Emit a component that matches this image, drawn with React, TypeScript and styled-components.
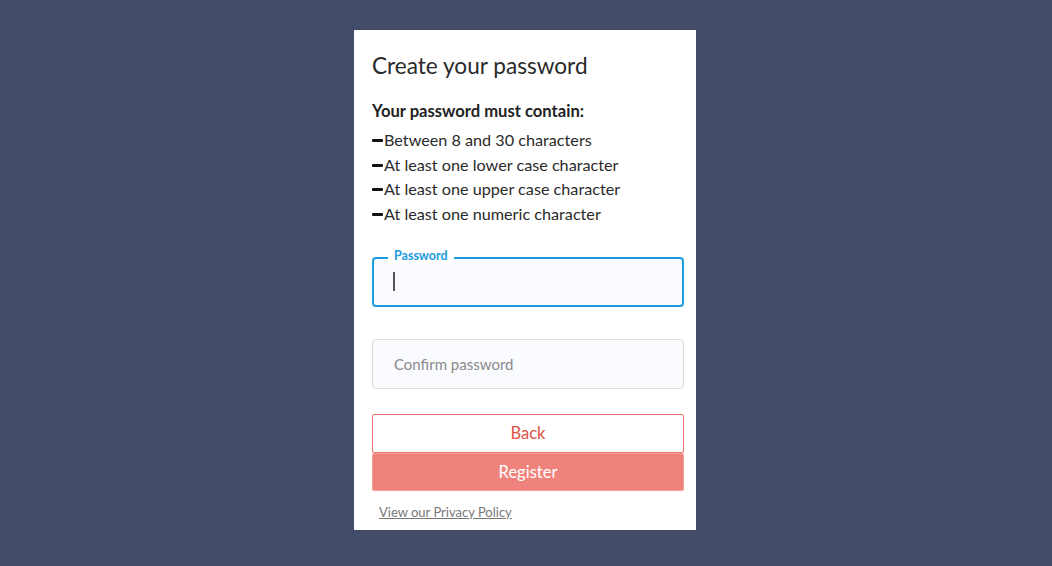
import styled, { createGlobalStyle } from "styled-components";

const GlobalStyle = createGlobalStyle`
  html, body {
    margin: 0;
    padding: 0;
    background: #424c69;
  }
  body {
    font-family: Lato, "Open Sans", sans-serif;
  }
`;

const requirements = [
  "Between 8 and 30 characters",
  "At least one lower case character",
  "At least one upper case character",
  "At least one numeric character",
];

const App = () => {
  return (
    <>
      <GlobalStyle />
      <StyledPage>
        <Card>
          <Title>Create your password</Title>
          <Subtitle>Your password must contain:</Subtitle>
          <RuleList>
            {requirements.map((rule) => (
              <Rule key={rule}>
                <Dash />
                {rule}
              </Rule>
            ))}
          </RuleList>

          <Field $focused>
            <FieldLabel>Password</FieldLabel>
            <Caret />
          </Field>
          <Field>
            <Placeholder>Confirm password</Placeholder>
          </Field>

          <Buttons>
            <Button>Back</Button>
            <Button $primary>Register</Button>
          </Buttons>
          <PrivacyLink href="#">View our Privacy Policy</PrivacyLink>
        </Card>
      </StyledPage>
    </>
  );
};

const StyledPage = styled.div`
  width: 1052px;
  height: 566px;
  display: flex;
  justify-content: center;
  align-items: flex-start;
  padding: 30px 2px 0 0;
  box-sizing: border-box;
`;

const Card = styled.div`
  width: 342px;
  height: 500px;
  background: #fff;
  box-sizing: border-box;
  padding: 22px 12px 0 18px;
  display: flex;
  flex-direction: column;
  color: #222;
`;

const Title = styled.h1`
  margin: 0;
  font-size: 22.6px;
  font-weight: 400;
  line-height: 28px;
  color: #2a2a2a;
`;

const Subtitle = styled.p`
  margin: 21px 0 0;
  font-size: 16.6px;
  font-weight: 700;
  line-height: 20px;
  color: #222;
`;

const RuleList = styled.ul`
  list-style: none;
  margin: 7px 0 0;
  padding: 0;
`;

const Rule = styled.li`
  display: flex;
  align-items: center;
  font-size: 16.2px;
  line-height: 24.7px;
  color: #2a2a2a;
`;

const Dash = styled.span`
  display: inline-block;
  width: 11px;
  height: 3px;
  border-radius: 1px;
  background: #111;
  margin-right: 1px;
`;

const Field = styled.div<{ $focused?: boolean }>`
  position: relative;
  height: 50px;
  box-sizing: border-box;
  margin-top: ${(p) => (p.$focused ? "30px" : "32px")};
  border: ${(p) => (p.$focused ? "2px solid #1b9be0" : "1px solid #dcdcdc")};
  border-radius: 4px;
  background: #f9fbfe;
  display: flex;
  align-items: center;
  padding-left: ${(p) => (p.$focused ? "19px" : "21px")};
`;

const FieldLabel = styled.span`
  position: absolute;
  top: -11px;
  left: 14px;
  padding: 0 6px 0 6px;
  background: #fff;
  font-size: 12.5px;
  font-weight: 700;
  line-height: 16px;
  color: #1b9be0;
`;

const Caret = styled.span`
  display: inline-block;
  width: 1.5px;
  height: 19px;
  background: #555;
`;

const Placeholder = styled.span`
  font-size: 15px;
  color: #8a8a8a;
`;

const Buttons = styled.div`
  margin-top: 25px;
  display: flex;
  flex-direction: column;
`;

const Button = styled.button<{ $primary?: boolean }>`
  height: ${(p) => (p.$primary ? "38px" : "39px")};
  width: 312px;
  box-sizing: border-box;
  border: 1px solid ${(p) => (p.$primary ? "#f5a09a" : "#e8736c")};
  border-radius: 2px;
  background: ${(p) => (p.$primary ? "#ef837b" : "#fff")};
  color: ${(p) => (p.$primary ? "#fff" : "#e05148")};
  font-family: Lato, "Open Sans", sans-serif;
  font-size: 16.5px;
  padding: 0;
  cursor: pointer;
`;

const PrivacyLink = styled.a`
  margin: 13px 0 0 7px;
  font-size: 13px;
  color: #777;
  text-decoration: underline;
  align-self: flex-start;
`;

export default App;
